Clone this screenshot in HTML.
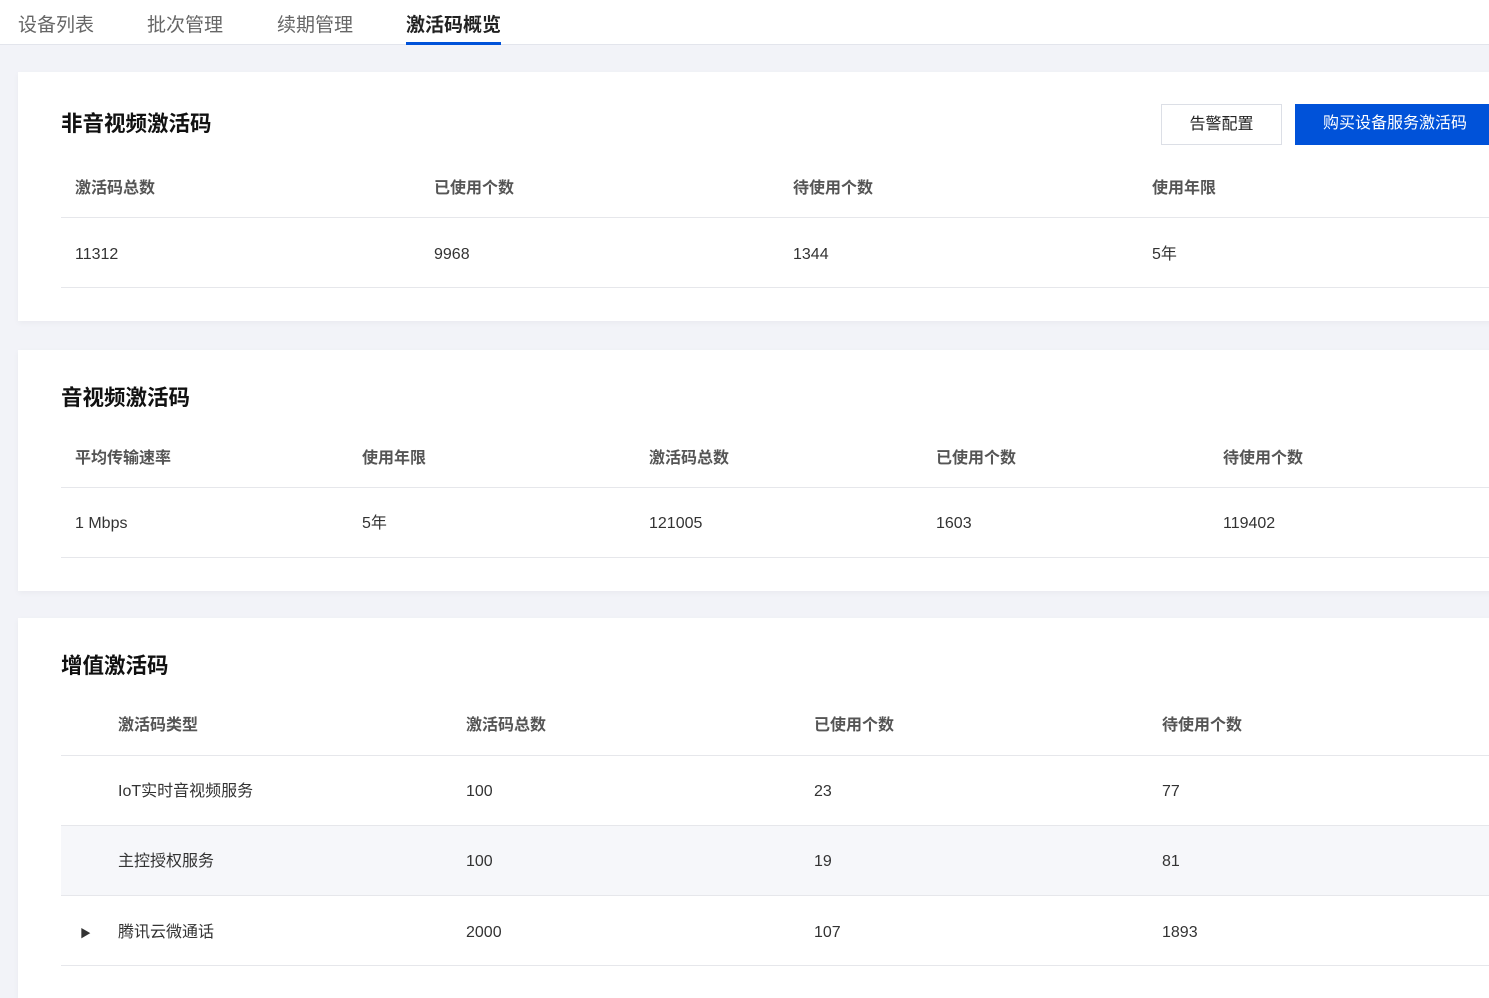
<!DOCTYPE html>
<html><head><meta charset="utf-8"><style>
*{margin:0;padding:0;box-sizing:border-box}
body{width:1489px;height:985px;overflow:hidden;background:#f2f3f8;font-family:"Liberation Sans","Noto Sans CJK SC",sans-serif;position:relative;color:#333}
.nav{position:absolute;left:0;top:0;width:1489px;height:45px;background:#fff;border-bottom:1px solid #e3e5ec}
.tab{position:absolute;top:14px;font-size:19px;color:#666;line-height:24px}
.tab.on{color:#222;font-weight:bold}
.ul{position:absolute;left:406px;top:42px;width:95px;height:3px;background:#0052d9}
.card{position:absolute;left:18px;width:1480px;background:#fff;box-shadow:0 2px 6px rgba(0,0,0,.04)}
.t{position:absolute;left:43px;font-size:21.5px;font-weight:bold;color:#111;line-height:26px}
.line{position:absolute;left:43px;right:0;height:1px;background:#e6e7eb}
.c{position:absolute;font-size:16px;line-height:18px;color:#333;white-space:nowrap}
.h{font-weight:bold;color:#555}
.btn{position:absolute;top:32px;height:41px;font-size:16px;line-height:39px;text-align:center}
</style></head><body>
<div class="nav">
<div class="tab" style="left:18px">设备列表</div>
<div class="tab" style="left:147px">批次管理</div>
<div class="tab" style="left:277px">续期管理</div>
<div class="tab on" style="left:406px">激活码概览</div>
<div class="ul"></div>
</div>

<div class="card" style="top:72px;height:249px">
<div class="t" style="top:39px">非音视频激活码</div>
<div class="btn" style="left:1143px;width:121px;border:1px solid #dcdfe6;color:#222">告警配置</div>
<div class="btn" style="left:1277px;width:200px;background:#0052d9;color:#fff">购买设备服务激活码</div>
<div class="c h" style="left:57px;top:108px">激活码总数</div>
<div class="c h" style="left:416px;top:108px">已使用个数</div>
<div class="c h" style="left:775px;top:108px">待使用个数</div>
<div class="c h" style="left:1134px;top:108px">使用年限</div>
<div class="line" style="top:145px"></div>
<div class="c" style="left:57px;top:174px">11312</div>
<div class="c" style="left:416px;top:174px">9968</div>
<div class="c" style="left:775px;top:174px">1344</div>
<div class="c" style="left:1134px;top:174px">5年</div>
<div class="line" style="top:215px"></div>
</div>

<div class="card" style="top:350px;height:241px">
<div class="t" style="top:35px">音视频激活码</div>
<div class="c h" style="left:57px;top:100px">平均传输速率</div>
<div class="c h" style="left:344px;top:100px">使用年限</div>
<div class="c h" style="left:631px;top:100px">激活码总数</div>
<div class="c h" style="left:918px;top:100px">已使用个数</div>
<div class="c h" style="left:1205px;top:100px">待使用个数</div>
<div class="line" style="top:137px"></div>
<div class="c" style="left:57px;top:165px">1 Mbps</div>
<div class="c" style="left:344px;top:165px">5年</div>
<div class="c" style="left:631px;top:165px">121005</div>
<div class="c" style="left:918px;top:165px">1603</div>
<div class="c" style="left:1205px;top:165px">119402</div>
<div class="line" style="top:207px"></div>
</div>

<div class="card" style="top:618px;height:380px">
<div class="t" style="top:35px">增值激活码</div>
<div class="c h" style="left:100px;top:99px">激活码类型</div>
<div class="c h" style="left:448px;top:99px">激活码总数</div>
<div class="c h" style="left:796px;top:99px">已使用个数</div>
<div class="c h" style="left:1144px;top:99px">待使用个数</div>
<div class="line" style="top:137px"></div>
<div class="c" style="left:100px;top:165px">IoT实时音视频服务</div>
<div class="c" style="left:448px;top:165px">100</div>
<div class="c" style="left:796px;top:165px">23</div>
<div class="c" style="left:1144px;top:165px">77</div>
<div style="position:absolute;left:43px;right:0;top:207px;height:70px;background:#f6f7fa;border-top:1px solid #e6e7eb"></div>
<div class="c" style="left:100px;top:235px">主控授权服务</div>
<div class="c" style="left:448px;top:235px">100</div>
<div class="c" style="left:796px;top:235px">19</div>
<div class="c" style="left:1144px;top:235px">81</div>
<div class="line" style="top:277px"></div>
<div class="c" style="left:62px;top:307px;font-size:11px">▶</div>
<div class="c" style="left:100px;top:306px">腾讯云微通话</div>
<div class="c" style="left:448px;top:306px">2000</div>
<div class="c" style="left:796px;top:306px">107</div>
<div class="c" style="left:1144px;top:306px">1893</div>
<div class="line" style="top:347px"></div>
</div>
</body></html>
